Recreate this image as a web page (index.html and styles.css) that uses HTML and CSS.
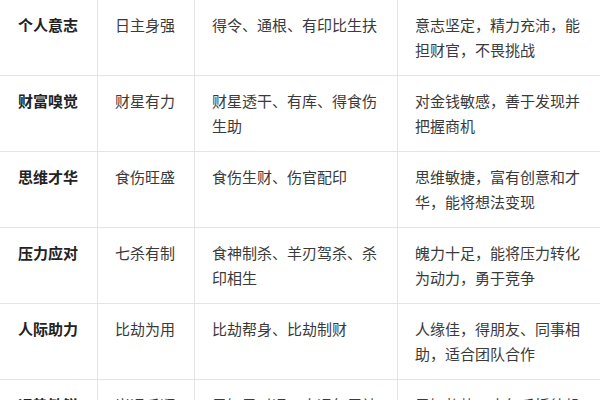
FILE: index.html
```html
<!DOCTYPE html>
<html lang="zh">
<head>
<meta charset="utf-8">
<link rel="stylesheet" href="styles.css">
</head>
<body>
<div class="table">
  <div class="cell head">个人意志</div>
  <div class="cell">日主身强</div>
  <div class="cell">得令、通根、有印比生扶</div>
  <div class="cell last">意志坚定，精力充沛，能担财官，不畏挑战</div>

  <div class="cell head">财富嗅觉</div>
  <div class="cell">财星有力</div>
  <div class="cell">财星透干、有库、得食伤生助</div>
  <div class="cell last">对金钱敏感，善于发现并把握商机</div>

  <div class="cell head">思维才华</div>
  <div class="cell">食伤旺盛</div>
  <div class="cell">食伤生财、伤官配印</div>
  <div class="cell last">思维敏捷，富有创意和才华，能将想法变现</div>

  <div class="cell head">压力应对</div>
  <div class="cell">七杀有制</div>
  <div class="cell">食神制杀、羊刃驾杀、杀印相生</div>
  <div class="cell last">魄力十足，能将压力转化为动力，勇于竞争</div>

  <div class="cell head">人际助力</div>
  <div class="cell">比劫为用</div>
  <div class="cell">比劫帮身、比劫制财</div>
  <div class="cell last">人缘佳，得朋友、同事相助，适合团队合作</div>

  <div class="cell head">运势敏锐</div>
  <div class="cell">岁运反顺</div>
  <div class="cell">早知己时运、大运年用神</div>
  <div class="cell last">早知趋势，大年反插待机</div>
</div>
</body>
</html>
```
FILE: styles.css
```css
html, body {
  margin: 0;
  padding: 0;
  background: #ffffff;
}

body {
  width: 600px;
  overflow: hidden;
  font-family: "Noto Sans CJK SC", "Noto Sans", sans-serif;
  font-size: 15px;
  line-height: 25px;
  color: #3a3a3a;
}

.table {
  display: grid;
  grid-template-columns: 98px 97px 203px 202px;
}

.cell {
  box-sizing: border-box;
  padding: 12px 17px 13px 17px;
  border-right: 1px solid #e4e4e4;
  border-bottom: 1px solid #e4e4e4;
  min-height: 76px;
}

.cell.head {
  padding-left: 18px;
  font-weight: 700;
  color: #222222;
}

.cell.last {
  border-right: none;
  padding-right: 10px;
}
```
